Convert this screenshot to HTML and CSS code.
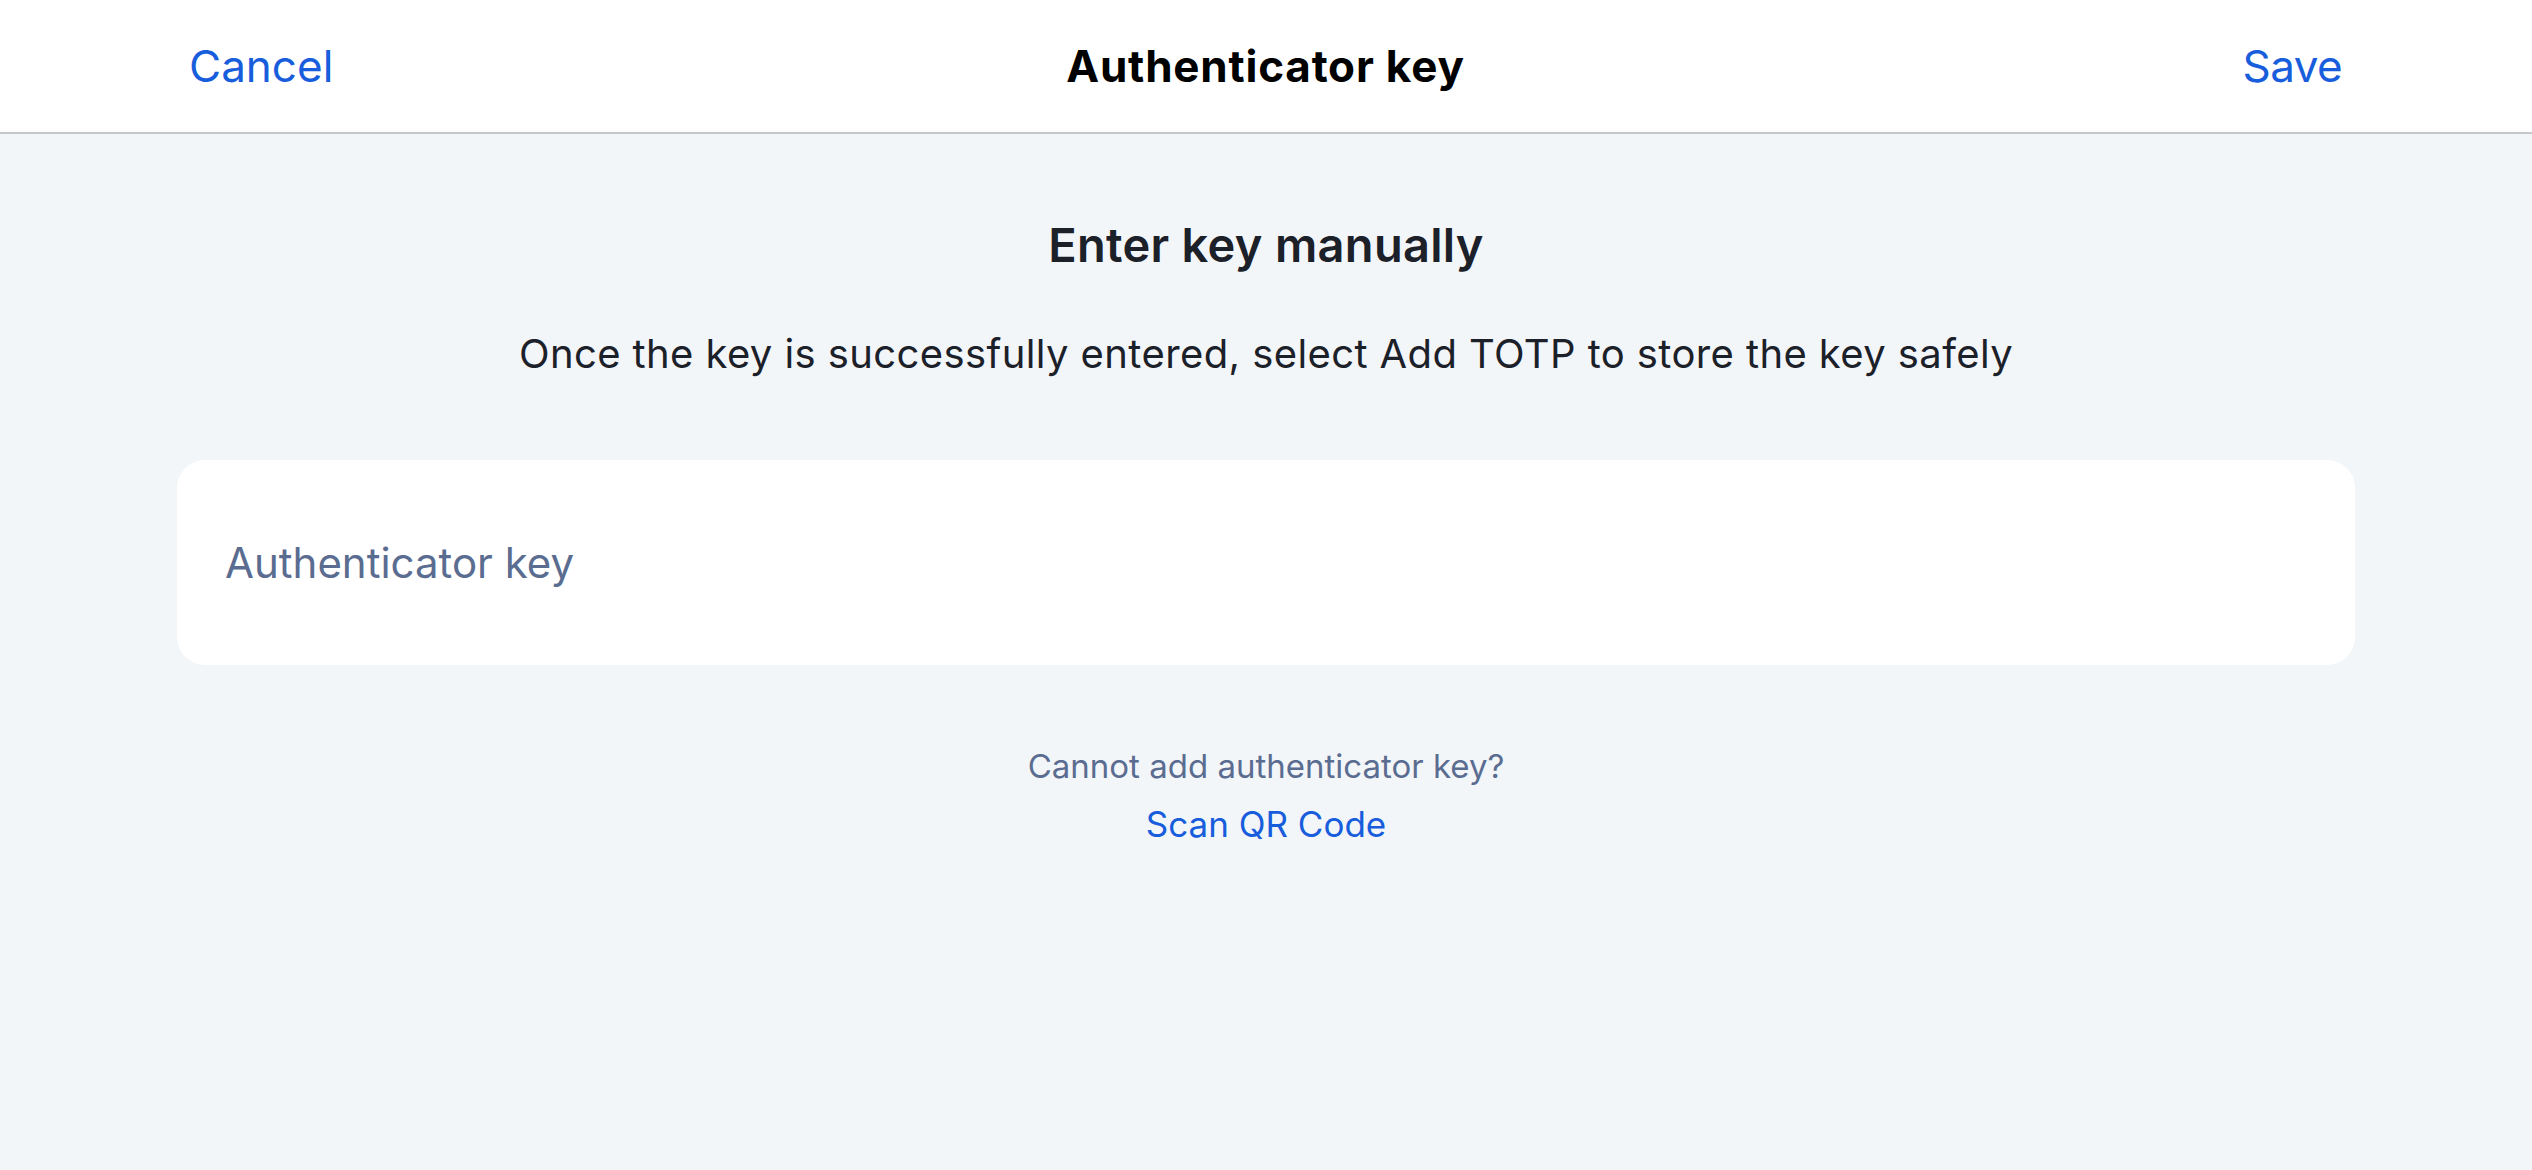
FILE: index.html
```html
<!DOCTYPE html>
<html lang="en">
<head>
<meta charset="utf-8">
<title>Authenticator key</title>
<link rel="stylesheet" href="styles.css">
</head>
<body>
<header class="topbar">
  <a class="nav-btn nav-left">Cancel</a>
  <h1 class="nav-title">Authenticator key</h1>
  <a class="nav-btn nav-right">Save</a>
</header>
<main class="content">
  <h2 class="heading">Enter key manually</h2>
  <p class="subtitle">Once the key is successfully entered, select Add TOTP to store the key safely</p>
  <div class="card">
    <span class="placeholder">Authenticator key</span>
  </div>
  <p class="hint">Cannot add authenticator key?</p>
  <a class="link">Scan QR Code</a>
</main>
</body>
</html>
```

FILE: styles.css
```css
html, body {
  margin: 0;
  padding: 0;
}
body {
  width: 2532px;
  height: 1170px;
  background: #f3f6f9;
  overflow: hidden;
  font-family: Inter, "Noto Sans", sans-serif;
}
.topbar {
  height: 134px;
  box-sizing: border-box;
  background: #ffffff;
  border-bottom: 2px solid #c6c7ca;
  display: grid;
  grid-template-columns: 1fr auto 1fr;
  align-items: center;
  padding: 0 190px 0 189px;
}
.nav-btn {
  color: #175ddc;
  font-size: 44px;
  line-height: 1;
}
.nav-right {
  justify-self: end;
  letter-spacing: -0.6px;
}
.nav-title {
  margin: 0;
  font-size: 44px;
  font-weight: 700;
  letter-spacing: 0.8px;
  color: #000000;
  line-height: 1;
}
.content {
  display: flex;
  flex-direction: column;
  align-items: center;
  padding: 83px 177px 0;
}
.heading {
  margin: 0;
  font-size: 47px;
  font-weight: 600;
  letter-spacing: 0.3px;
  line-height: 1.2;
  color: #1b2029;
}
.subtitle {
  margin: 57px 0 0;
  font-size: 40px;
  letter-spacing: 0.4px;
  line-height: 1.2;
  color: #1b2029;
}
.card {
  margin-top: 82px;
  align-self: stretch;
  height: 205px;
  background: #ffffff;
  border-radius: 28px;
  display: flex;
  align-items: center;
  padding: 0 48px;
}
.placeholder {
  font-size: 42px;
  color: #5a6d91;
}
.hint {
  margin: 79px 0 0;
  font-size: 33px;
  line-height: 44px;
  color: #5a6d91;
}
.link {
  margin-top: 14px;
  font-size: 35px;
  line-height: 44px;
  color: #175ddc;
}
```
